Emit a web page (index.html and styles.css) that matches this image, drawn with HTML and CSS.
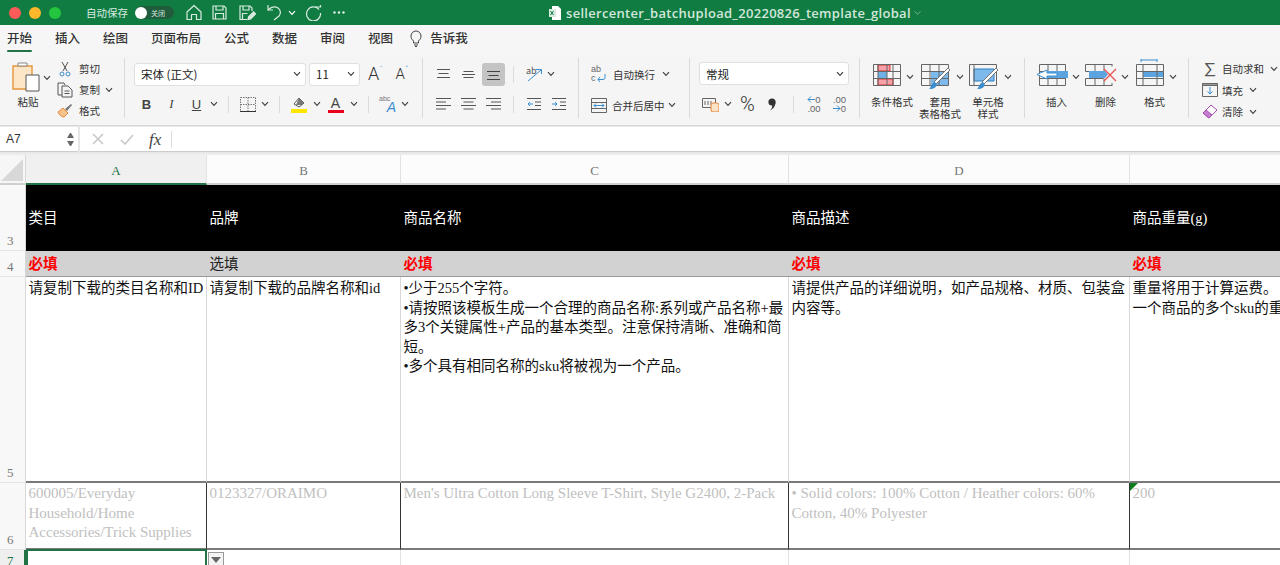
FILE: index.html
```html
<!DOCTYPE html>
<html lang="zh-CN">
<head>
    <meta charset="UTF-8">
    <title>sellercenter_batchupload_20220826_template_global</title>
    <link rel="stylesheet" href="styles.css">
</head>
<body>
    <svg class="defs" width="0" height="0">
        <symbol id="chev" viewBox="0 0 8 6"><path d="M1 1.200 4 4.400 7 1.200" fill="none" stroke="#444" stroke-width="1.200"/></symbol>
    </svg>

    <!-- Title bar -->
    <div class="titlebar">
        <div class="lights"><i class="red"></i><i class="yellow"></i><i class="green"></i></div>
        <span class="autosave">自动保存</span>
        <span class="toggle"><i></i>关闭</span>
        <svg class="home" width="16" height="17" viewBox="0 0 16 17" fill="none" stroke="#d9ebe1" stroke-width="1.200"><path d="M1 8 8 1.500 15 8v7.500h-4.500v-5h-5v5H1z" stroke-linejoin="round"/></svg>
        <svg class="save" width="15" height="15" viewBox="0 0 15 15" fill="none" stroke="#d9ebe1" stroke-width="1.200"><path d="M1 1h11l2 2v11H1z"/><path d="M4 1v4h7V1M3.500 14V8.500h8V14"/></svg>
        <svg class="saveas" width="17" height="16" viewBox="0 0 17 16" fill="none" stroke="#d9ebe1" stroke-width="1.200"><path d="M8 14.500H1V1h10l2 2v3"/><path d="M4 1v4h6V1M3.500 14V8.500h5"/><path d="m9 14.500.6-2.600 5-5 2 2-5 5z" fill="#d9ebe1"/></svg>
        <svg class="undo" width="15" height="17" viewBox="0 0 15 17" fill="none" stroke="#d9ebe1" stroke-width="1.200"><path d="M1 1v5h5"/><path d="M1 6c3-3 7-4 10-2 3 2 3 6 1 8l-5 4"/></svg>
        <svg class="chev-light" width="8" height="6"><use href="#chev"/></svg>
        <svg class="redo" width="17" height="17" viewBox="0 0 17 17" fill="none" stroke="#d9ebe1" stroke-width="1.200"><path d="M14 5.500A7 7 0 1 0 15.500 9"/><path d="M10 3h5.500V1"/></svg>
        <svg class="more" width="12" height="3" viewBox="0 0 12 3" fill="#e4f0ea"><circle cx="1.500" cy="1.500" r="1.200"/><circle cx="6" cy="1.500" r="1.200"/><circle cx="10.500" cy="1.500" r="1.200"/></svg>
        <svg class="xls" width="12" height="14" viewBox="0 0 12 14"><path d="M3 0h6l3 3v11H3z" fill="#fff"/><path d="M0 3h7v8H0z" fill="#d9ebe1"/><path d="m1.500 5 3 4m0-4-3 4" stroke="#107c41"/></svg>
        <span class="filename">sellercenter_batchupload_20220826_template_global</span>
        <svg class="chev-title" width="9" height="6" viewBox="0 0 8 6"><path d="M1 1.200 4 4.400 7 1.200" fill="none" stroke="#6fae8d" stroke-width="1"/></svg>
    </div>

    <!-- Tabs -->
    <div class="tabs">
        <a class="active">开始</a>
        <a>插入</a>
        <a>绘图</a>
        <a>页面布局</a>
        <a>公式</a>
        <a>数据</a>
        <a>审阅</a>
        <a>视图</a>
        <svg class="bulb" width="12" height="17" viewBox="0 0 12 17" fill="none" stroke="#444"><path d="M3.500 11C2 9.500 1 8.500 1 6a5 5 0 0 1 10 0c0 2.500-1 3.500-2.500 5v2h-5zM4 15h4M5 16.500h2"/></svg>
        <a class="tell">告诉我</a>
    </div>

    <!-- Ribbon -->
    <div class="ribbon">
        <div class="group g-clip">
            <div class="paste">
                <svg width="36" height="30" viewBox="0 0 36 30">
                    <path d="M1 4h19v23H1z" fill="#fbe6c8" stroke="#e8963c" stroke-width="1.400"/>
                    <path d="M6 4h9V1H6z" fill="#fff" stroke="#888"/>
                    <path d="M14 13h13v16H14z" fill="#fff" stroke="#555"/>
                </svg>
                <svg class="paste-chev" width="8" height="6"><use href="#chev"/></svg>
                <span>粘贴</span>
            </div>
            <div class="clip-list">
                <div class="clip-row">
                    <svg width="12" height="16" viewBox="0 0 12 16" fill="none" stroke="#555"><path d="M3 1l5 9M9 1 4 10"/><circle cx="3" cy="13" r="2" stroke="#3b8ed0"/><circle cx="9" cy="13" r="2" stroke="#3b8ed0"/></svg>
                    <span>剪切</span>
                </div>
                <div class="clip-row">
                    <svg width="16" height="16" viewBox="0 0 16 16" fill="none" stroke="#555"><path d="M5 13H1V1h6l1 2"/><path d="M5 4h6l4 4v7H5zM7.500 9h5M7.500 11.500h5"/></svg>
                    <span>复制</span>
                    <svg width="8" height="6"><use href="#chev"/></svg>
                </div>
                <div class="clip-row">
                    <svg width="16" height="15" viewBox="0 0 16 15"><path d="M1 9l5-4 5 5-4 4C5 14 2 12 1 9z" fill="#f4c48a" stroke="#e8863c"/><path d="M8 6l6-5 1 1-5 6z" fill="#777"/></svg>
                    <span>格式</span>
                </div>
            </div>
        </div>

        <div class="group g-font">
            <div class="grid font-row1">
                <div class="select font-select">宋体 (正文)<svg width="8" height="6"><use href="#chev"/></svg></div>
                <div class="select size-select">11<svg width="8" height="6"><use href="#chev"/></svg></div>
                <span class="grow">A<sup>ˆ</sup></span>
                <span class="shrink">A<sup>ˇ</sup></span>
            </div>
            <div class="grid font-row2">
                <b class="glyph">B</b>
                <i class="glyph serif">I</i>
                <u class="glyph">U</u>
                <svg width="8" height="6"><use href="#chev"/></svg>
                <i class="sep"></i>
                <svg width="16" height="15" viewBox="0 0 16 15" fill="none" stroke="#777" stroke-dasharray="1.500 1"><path d="M.5.500h15v14H.5zM8 .500v14M.5 7.500h15"/><path d="M0 14.500h16" stroke="#333" stroke-dasharray="none"/></svg>
                <svg width="8" height="6"><use href="#chev"/></svg>
                <i class="sep"></i>
                <svg width="16" height="17" viewBox="0 0 16 17"><path d="M3 8l5-6 5 5-5 4z" fill="#fff" stroke="#555"/><path d="M8 2l5 5-2 2H5z" fill="#777"/><path d="M0 13h16v4H0z" fill="#ffe600"/></svg>
                <svg width="8" height="6"><use href="#chev"/></svg>
                <span class="font-color">A</span>
                <svg width="8" height="6"><use href="#chev"/></svg>
                <i class="sep"></i>
                <span class="abc"><small>abc</small><em>A</em></span>
                <svg width="8" height="6"><use href="#chev"/></svg>
            </div>
        </div>

        <div class="group g-align">
            <div class="grid align-row1">
                <svg width="15" height="11" viewBox="0 0 15 11" stroke="#555"><path d="M1 .5h13M2.500 4.500h10M1 8.500h13"/></svg>
                <svg width="15" height="11" viewBox="0 0 15 11" stroke="#555"><path d="M2.500 2.500h10M1 5.500h13M2.500 8.500h10"/></svg>
                <span class="pressed"><svg width="15" height="11" viewBox="0 0 15 11" stroke="#444"><path d="M1 2.500h13M2.500 6.500h10M1 10.500h13"/></svg></span>
                <i class="sep"></i>
                <span class="orient">ab<svg width="16" height="14" viewBox="0 0 16 14" fill="none" stroke="#3b8ed0"><path d="M1 13 14 2M9 1.500h5.500V6"/></svg></span>
                <svg width="8" height="6"><use href="#chev"/></svg>
            </div>
            <div class="grid align-row2">
                <svg width="15" height="14" viewBox="0 0 15 14" stroke="#555"><path d="M0 1.500h15M0 5h10M0 8.500h15M0 12h10"/></svg>
                <svg width="15" height="14" viewBox="0 0 15 14" stroke="#555"><path d="M0 1.500h15M2.500 5h10M0 8.500h15M2.500 12h10"/></svg>
                <svg width="15" height="14" viewBox="0 0 15 14" stroke="#555"><path d="M0 1.500h15M5 5h10M0 8.500h15M5 12h10"/></svg>
                <i class="sep"></i>
                <svg width="15" height="14" viewBox="0 0 15 14" fill="none" stroke="#555"><path d="M0 1.500h14M8 5h6M8 8.500h6M0 12.500h14"/><path d="M6 7H1M3 5 1 7l2 2" stroke="#3b8ed0"/></svg>
                <svg width="15" height="14" viewBox="0 0 15 14" fill="none" stroke="#555"><path d="M0 1.500h14M8 5h6M8 8.500h6M0 12.500h14"/><path d="M0 7h5M3 5l2 2-2 2" stroke="#3b8ed0"/></svg>
            </div>
        </div>

        <div class="group g-wrap">
            <div class="wrap-row">
                <span class="wrap-icon">ab<br>c<svg width="9" height="8" viewBox="0 0 9 8" fill="none" stroke="#3b8ed0"><path d="M8 0v3.500a2 2 0 0 1-2 2H1M3 3 1 5.500 3 8"/></svg></span>
                <span>自动换行</span>
                <svg width="8" height="6"><use href="#chev"/></svg>
            </div>
            <div class="wrap-row merge">
                <svg width="16" height="15" viewBox="0 0 16 15" fill="none" stroke="#666"><path d="M.5.500h15v14H.5zM.5 4.500h15M.5 10.500h15"/><path d="M3 7.500h10M5 5.500l-2 2 2 2M11 5.500l2 2-2 2" stroke="#3b8ed0"/></svg>
                <span>合并后居中</span>
                <svg width="8" height="6"><use href="#chev"/></svg>
            </div>
        </div>

        <div class="group g-number">
            <div class="select number-select">常规<svg width="8" height="6"><use href="#chev"/></svg></div>
            <div class="grid number-row">
                <svg width="17" height="15" viewBox="0 0 17 15"><path d="M.5 1.500h13v9H.5z" fill="none" stroke="#666"/><path d="M3 4v4M6 4v4M9 4v4" stroke="#666"/><rect x="9" y="6" width="8" height="9" rx="2" fill="#fbe3c8" stroke="#e8863c"/></svg>
                <svg width="8" height="6"><use href="#chev"/></svg>
                <span class="percent">%</span>
                <svg width="8" height="13" viewBox="0 0 8 13"><circle cx="4" cy="4" r="3.600" fill="#333"/><path d="M7.500 4c0 4-2 7-5.500 8.500 2-2 2.500-4 2-5z" fill="#333"/></svg>
                <i class="sep"></i>
                <span class="dec"><svg width="8" height="7" viewBox="0 0 8 7" fill="none" stroke="#3b8ed0"><path d="M8 3.500H1M4 .5l-3 3 3 3"/></svg>0<br>.00</span>
                <span class="dec">.00<br><svg width="8" height="7" viewBox="0 0 8 7" fill="none" stroke="#3b8ed0"><path d="M0 3.500h7M4 .5l3 3-3 3"/></svg>0</span>
            </div>
        </div>

        <div class="group g-styles">
            <div class="big">
                <div class="big-icon">
                    <svg width="28" height="22" viewBox="0 0 28 22"><path d="M5 1h12v6H5zM5 15h15v6H5z" fill="#f8a0a8" stroke="#d33"/><path d="M5 8h9v6H5z" fill="#6fb1e4"/><path d="M.5.500h27v21H.5zM.5 7.500h27M.5 14.500h27M5 .500v21M14 .500v21M20 .500v21" fill="none" stroke="#666"/></svg>
                    <svg width="8" height="6"><use href="#chev"/></svg>
                </div>
                <span>条件格式</span>
            </div>
            <div class="big">
                <div class="big-icon">
                    <svg width="30" height="26" viewBox="0 0 30 26"><path d="M10 8h17v13H10z" fill="#7db9ea"/><path d="M.5.500h27v21H.5zM.5 7.500h27M.5 14.500h27M9 .500v21M18 .500v21" fill="none" stroke="#666"/><path d="M13 18 27 4l2 2-14 14z" fill="#fff" stroke="#777"/><path d="M8 25c2-1 2-6 6-7l2 3c-2 4-5 4-8 4z" fill="#3b8ed0"/></svg>
                    <svg width="8" height="6"><use href="#chev"/></svg>
                </div>
                <span>套用<br>表格格式</span>
            </div>
            <div class="big">
                <div class="big-icon">
                    <svg width="30" height="26" viewBox="0 0 30 26"><path d="M5 5h20v12H5z" fill="#7db9ea" stroke="#2b7cc2"/><path d="M.5.500h27v21H.5zM5 .500v21" fill="none" stroke="#666"/><path d="M13 18 27 4l2 2-14 14z" fill="#fff" stroke="#777"/><path d="M8 25c2-1 2-6 6-7l2 3c-2 4-5 4-8 4z" fill="#3b8ed0"/></svg>
                    <svg width="8" height="6"><use href="#chev"/></svg>
                </div>
                <span>单元格<br>样式</span>
            </div>
        </div>

        <div class="group g-cells">
            <div class="big">
                <div class="big-icon">
                    <svg width="32" height="22" viewBox="0 0 32 22"><path d="M3.500.500h26v21h-26z" fill="none" stroke="#666"/><path d="M3.500 7.500h26M3.500 14.500h26M12 .500v21M21 .500v21" stroke="#666"/><path d="M9 7h23v7H9z" fill="#5ba4e0"/><path d="M11 6 1 10.500l10 4.500v-3h10V9H11z" fill="#fff" stroke="#3b8ed0"/></svg>
                    <svg width="8" height="6"><use href="#chev"/></svg>
                </div>
                <span>插入</span>
            </div>
            <div class="big">
                <div class="big-icon">
                    <svg width="32" height="22" viewBox="0 0 32 22"><path d="M.5.500h27M.5 21.500h27M.5 7.500h18M.5 14.500h18M.5.500v7M.5 14.500v7M10 .500v7M10 14.500v7M19 .500v7M19 14.500v7M27 .500v2M27 19v2" fill="none" stroke="#666"/><path d="M4 7h16l3 3.500-3 3.500H4z" fill="#5ba4e0"/><path d="M19 5l12 12M31 5 19 17" stroke="#e8524a" stroke-width="1.300"/></svg>
                    <svg width="8" height="6"><use href="#chev"/></svg>
                </div>
                <span>删除</span>
            </div>
            <div class="big">
                <div class="big-icon">
                    <svg width="28" height="27" viewBox="0 0 28 27"><path d="M5 1h16M5 0v3M21 0v3" stroke="#3b8ed0" fill="none"/><path d="M7 12h20v6H7z" fill="#5ba4e0"/><path d="M.5 5.500h27v21H.5zM.5 12.500h27M.5 19.500h27M7 5.500v21M21 5.500v21" fill="none" stroke="#666"/></svg>
                    <svg width="8" height="6"><use href="#chev"/></svg>
                </div>
                <span>格式</span>
            </div>
        </div>

        <div class="group g-edit">
            <div class="edit-row">
                <span class="edit-icon sum">∑</span>
                <span>自动求和</span>
                <svg width="8" height="6"><use href="#chev"/></svg>
            </div>
            <div class="edit-row">
                <span class="edit-icon"><svg width="16" height="14" viewBox="0 0 16 14" fill="none" stroke="#666"><path d="M.5.500h15v13H.5z"/><path d="M.5.500h15v2H.5z" fill="#999"/><path d="M8 4v7M5.500 8.500 8 11l2.500-2.500" stroke="#3b8ed0"/></svg></span>
                <span>填充</span>
                <svg width="8" height="6"><use href="#chev"/></svg>
            </div>
            <div class="edit-row">
                <span class="edit-icon"><svg width="16" height="15" viewBox="0 0 16 15"><path d="M1 9 9 1l6 5-8 8z" fill="#fff" stroke="#a64bb0"/><path d="M1 9l3-3 6 5-3 3z" fill="#c77fd0" stroke="#a64bb0"/></svg></span>
                <span>清除</span>
                <svg width="8" height="6"><use href="#chev"/></svg>
            </div>
        </div>
    </div>

    <!-- Formula bar -->
    <div class="formula">
        <div class="namebox">A7<span class="spin"><i class="up"></i><i class="down"></i></span></div>
        <div class="fbar">
            <svg width="12" height="12" viewBox="0 0 12 12" stroke="#c8c8c8" stroke-width="1.600"><path d="M1 1l10 10M11 1 1 11"/></svg>
            <svg class="check" width="14" height="11" viewBox="0 0 14 11" fill="none" stroke="#c8c8c8" stroke-width="1.600"><path d="M1 6l4 4 8-9"/></svg>
            <span class="fx">fx</span>
        </div>
    </div>

    <!-- Sheet -->
    <div class="sheet">
        <div class="corner"><i></i></div>
        <div class="col sel">A</div>
        <div class="col">B</div>
        <div class="col">C</div>
        <div class="col">D</div>
        <div class="col">E</div>

        <div class="rownum">3</div>
        <div class="cell head">类目</div>
        <div class="cell head">品牌</div>
        <div class="cell head">商品名称</div>
        <div class="cell head">商品描述</div>
        <div class="cell head">商品重量(g)</div>

        <div class="rownum">4</div>
        <div class="cell req must">必填</div>
        <div class="cell req">选填</div>
        <div class="cell req must">必填</div>
        <div class="cell req must">必填</div>
        <div class="cell req must">必填</div>

        <div class="rownum">5</div>
        <div class="cell help">请复制下载的类目名称和ID</div>
        <div class="cell help">请复制下载的品牌名称和id</div>
        <div class="cell help">•少于255个字符。<br>•请按照该模板生成一个合理的商品名称:系列或产品名称+最<br>多3个关键属性+产品的基本类型。注意保持清晰、准确和简<br>短。<br>•多个具有相同名称的sku将被视为一个产品。</div>
        <div class="cell help">请提供产品的详细说明，如产品规格、材质、包装盒<br>内容等。</div>
        <div class="cell help">重量将用于计算运费。<br>一个商品的多个sku的重量</div>

        <div class="rownum">6</div>
        <div class="cell sample">600005/Everyday<br>Household/Home<br>Accessories/Trick Supplies</div>
        <div class="cell sample">0123327/ORAIMO</div>
        <div class="cell sample">Men's Ultra Cotton Long Sleeve T-Shirt, Style G2400, 2-Pack</div>
        <div class="cell sample">• Solid colors: 100% Cotton / Heather colors: 60%<br>Cotton, 40% Polyester</div>
        <div class="cell sample flagged">200</div>

        <div class="rownum sel">7</div>
        <div class="cell last active"><span class="dropdown"></span></div>
        <div class="cell last"></div>
        <div class="cell last"></div>
        <div class="cell last"></div>
        <div class="cell last"></div>
    </div>
</body>
</html>
```

FILE: styles.css
```css
* {
    margin: 0;
    padding: 0;
    box-sizing: border-box;
}

html, body {
    height: 100%;
    overflow: hidden;
}

body {
    background: #fff;
    color: #333;
    font-family: "Noto Sans CJK SC", "Noto Sans", sans-serif;
    font-size: 10.5px;
    width: 1280px;
}

.defs {
    position: absolute;
}

/* Title bar */
.titlebar {
    display: flex;
    align-items: center;
    height: 25px;
    background: #107c41;
    color: #d9ebe1;
}

.titlebar svg { flex: none; }

.lights {
    display: flex;
    gap: 8px;
    margin-left: 9px;
}

.lights i {
    width: 12px;
    height: 12px;
    border-radius: 50%;
}

.lights .red { background: #fc5b57; }
.lights .yellow { background: #fdb72c; }
.lights .green { background: #25c63f; }

.autosave {
    margin-left: 25px;
    font-size: 10.5px;
}

.toggle {
    display: flex;
    align-items: center;
    gap: 4px;
    width: 39px;
    height: 13px;
    margin-left: 7px;
    border-radius: 7px;
    background: #205c3c;
    font-size: 7px;
}

.toggle i {
    width: 12px;
    height: 12px;
    border-radius: 50%;
    background: #fff;
}

.home { margin-left: 12px; }
.save { margin-left: 10px; }
.saveas { margin-left: 12px; }
.undo { margin-left: 11px; }
.chev-light { margin-left: 6px; filter: invert(1) brightness(1.6); }
.redo { margin-left: 9px; }
.more { margin-left: 11px; }
.xls { margin-left: 204px; }

.filename {
    margin-left: 5px;
    font-family: "Open Sans", sans-serif;
    font-size: 13px;
    font-weight: 600;
    letter-spacing: .3px;
    color: #d3e6dc;
}

.chev-title { margin-left: 2px; }

/* Tabs */
.tabs {
    display: flex;
    align-items: center;
    height: 30px;
    padding: 0 0 4px 7px;
    gap: 23px;
    background: #f6f6f6;
}

.tabs a {
    position: relative;
    font-size: 12.5px;
    line-height: 18px;
    font-weight: 500;
    color: #333;
}

.tabs a.active::after {
    content: "";
    position: absolute;
    left: 0;
    right: 0;
    bottom: -5px;
    height: 2px;
    background: #217346;
    border-radius: 1px;
}

.bulb { margin-left: -6px; }
.tabs .tell { margin-left: -15px; }

/* Ribbon */
.ribbon {
    display: flex;
    height: 71px;
    padding-top: 3px;
    background: #f5f5f5;
    border-bottom: 1px solid #d8d8d8;
}

.group {
    height: 60px;
    border-right: 1px solid #dadada;
    flex: none;
}

.grid {
    display: grid;
    place-items: center;
    height: 24px;
}

.sep {
    width: 1px;
    height: 17px;
    background: #dcdcdc;
}

.select {
    display: flex;
    align-items: center;
    justify-content: space-between;
    height: 23px;
    padding: 0 4px 0 6px;
    background: #fff;
    border: 1px solid #e0e0e0;
    border-radius: 3px;
    font-size: 11.5px;
    color: #222;
}

/* Clipboard */
.g-clip {
    display: flex;
    width: 125px;
}

.paste {
    position: relative;
    width: 57px;
    padding: 4px 0 0 12px;
}

.paste svg { display: block; }

.paste .paste-chev {
    position: absolute;
    left: 43px;
    top: 17px;
}

.paste span {
    display: block;
    width: 32px;
    margin-top: 2px;
    text-align: center;
}

.clip-row {
    display: flex;
    align-items: center;
    height: 21px;
}

.clip-row svg:first-child { width: 16px; margin-right: 6px; }
.clip-row span { margin-right: 5px; }

/* Font */
.g-font {
    width: 298px;
    padding: 4px 0 0 9px;
}

.font-row1 {
    grid-template-columns: 175px 51px 31px 22px;
    margin-bottom: 6px;
}

.font-select {
    width: 172px;
    justify-self: start;
}

.size-select { width: 51px; }

.grow, .shrink {
    font-family: Roboto, sans-serif;
    font-weight: 300;
    font-size: 18px;
    color: #333;
    line-height: 1;
}

.shrink { font-size: 15px; }

.grow sup, .shrink sup {
    font-size: 9px;
    color: #3b8ed0;
    line-height: 0;
}

.font-row2 {
    grid-template-columns: 25px 25px 25px 10px 18px 21px 14px 14px 26px 10px 27px 10px 18px 21px 14px;
}

.glyph {
    font-family: "Liberation Sans", sans-serif;
    font-size: 13px;
    color: #444;
}

.serif { font-family: "Liberation Serif", serif; }

.font-color {
    width: 16px;
    font-family: "Liberation Sans", sans-serif;
    font-size: 14px;
    line-height: 14px;
    text-align: center;
    color: #444;
    border-bottom: 3px solid #e8001c;
}

.abc {
    position: relative;
    width: 17px;
    height: 18px;
    color: #777;
}

.abc small {
    position: absolute;
    left: 0;
    top: 0;
    font-size: 7px;
    font-family: "Liberation Sans", sans-serif;
}

.abc em {
    position: absolute;
    right: 0;
    bottom: -1px;
    font-size: 14px;
    line-height: 14px;
    color: #3b8ed0;
    font-family: "Liberation Sans", sans-serif;
}

/* Alignment */
.g-align {
    width: 156px;
    padding: 4px 0 0 7px;
}

.align-row1 {
    grid-template-columns: 26px 25px 25px 14px 28px 6px;
    margin-bottom: 6px;
}

.align-row2 {
    grid-template-columns: 26px 25px 25px 14px 28px 22px;
}

.pressed {
    display: flex;
    align-items: center;
    justify-content: center;
    width: 23px;
    height: 23px;
    background: #c4c4c4;
    border-radius: 3px;
}

.orient {
    position: relative;
    width: 16px;
    height: 16px;
    font-size: 9px;
    line-height: 9px;
    color: #555;
}

.orient svg {
    position: absolute;
    left: 1px;
    top: 2px;
}

/* Wrap and merge */
.g-wrap {
    width: 111px;
    padding: 4px 0 0 12px;
}

.wrap-row {
    display: flex;
    align-items: center;
    gap: 7px;
    height: 24px;
    margin-bottom: 7px;
}

.merge { gap: 5px; }
.merge svg:last-child { margin-left: -2px; }

.wrap-icon {
    position: relative;
    width: 15px;
    height: 18px;
    font-family: "Liberation Sans", sans-serif;
    font-size: 9px;
    line-height: 9px;
    color: #666;
}

.wrap-icon svg {
    position: absolute;
    right: 0;
    bottom: 1px;
}

/* Number */
.g-number {
    width: 170px;
    padding: 4px 0 0 9px;
}

.number-select {
    width: 150px;
    margin-bottom: 7px;
}

.number-row {
    grid-template-columns: 22px 14px 25px 24px 18px 24px 27px;
}

.percent {
    font-family: Roboto, sans-serif;
    font-weight: 300;
    font-size: 20px;
    line-height: 1;
    color: #333;
}

.dec {
    font-family: "Liberation Sans", sans-serif;
    font-size: 9.5px;
    line-height: 9px;
    text-align: right;
    color: #666;
}

/* Styles and cells */
.g-styles {
    display: flex;
    width: 165px;
    padding: 6px 0 0 8px;
}

.g-cells {
    display: flex;
    width: 164px;
    padding: 6px 0 0 7px;
}

.big {
    width: 48px;
    text-align: center;
    line-height: 12px;
}

.big-icon {
    display: flex;
    align-items: flex-start;
    gap: 5px;
    height: 32px;
    padding-left: 5px;
    text-align: left;
}

.big-icon svg:last-child { margin-top: 10px; flex: none; }
.big-icon svg:first-child { flex: none; }

.g-cells .big-icon { padding-left: 4px; gap: 4px; }
.g-cells .big { width: 49px; }
.g-cells .big:last-child .big-icon { margin-top: -5px; height: 37px; padding-left: 6px; gap: 5px; }
.g-cells .big:last-child .big-icon svg:last-child { margin-top: 15px; }

/* Editing */
.g-edit {
    width: 91px;
    border-right: none;
    padding-left: 10px;
}

.edit-row {
    display: flex;
    align-items: center;
    height: 21.5px;
}

.edit-row span:nth-child(2) { margin-right: 6px; }

.edit-icon {
    display: flex;
    justify-content: center;
    align-items: center;
    width: 22px;
    margin-right: 1px;
}

.sum {
    font-size: 17px;
    line-height: 1;
    color: #555;
}

/* Formula bar */
.formula {
    display: flex;
    height: 29px;
    padding-top: 1px;
    background: #e6e6e6;
    border-bottom: 2px solid #ececec;
}

.namebox {
    position: relative;
    width: 78px;
    height: 25px;
    padding-left: 6px;
    background: #fff;
    border-bottom: 1px solid #ccc;
    font-family: "Liberation Sans", sans-serif;
    font-size: 12px;
    line-height: 25px;
    color: #333;
}

.spin {
    position: absolute;
    right: 4px;
    top: 6px;
    width: 7px;
}

.spin i {
    display: block;
    border-left: 3.5px solid transparent;
    border-right: 3.5px solid transparent;
}

.spin .up { border-bottom: 5px solid #666; margin-bottom: 3px; }
.spin .down { border-top: 5px solid #666; }

.fbar {
    display: flex;
    align-items: center;
    flex: 1;
    height: 25px;
    margin-left: 2px;
    padding-left: 12px;
    background: #fff;
    border-bottom: 1px solid #ccc;
}

.check { margin-left: 16px; }

.fx {
    width: 23px;
    margin-left: 15px;
    border-right: 1px solid #ddd;
    font-family: "Liberation Serif", serif;
    font-size: 17px;
    font-style: italic;
    line-height: 17px;
    color: #444;
}

/* Sheet */
.sheet {
    display: grid;
    grid-template-columns: 26px 181px 194px 388px 341px 400px;
    grid-template-rows: 30px 66px 26px 206px 67px 15px;
    font-family: "Liberation Serif", "Noto Sans CJK SC", serif;
    font-size: 14.5px;
    line-height: 19.5px;
    color: #111;
}

.corner {
    position: relative;
    background: #f6f6f6;
    border-right: 1px solid #d8d8d8;
    border-bottom: 2px solid #cfcfcf;
}

.corner i {
    position: absolute;
    right: 2px;
    bottom: 2px;
    border-left: 22px solid transparent;
    border-bottom: 22px solid #d8d8d8;
}

.col {
    display: flex;
    align-items: center;
    justify-content: center;
    padding-top: 3px;
    background: #fcfcfc;
    border-right: 1px solid #e2e2e2;
    border-bottom: 2px solid #cfcfcf;
    font-size: 13px;
    color: #777;
}

.col.sel {
    background: #f0f0f0;
    border-bottom-color: #217346;
    color: #217346;
}

.rownum {
    display: flex;
    align-items: flex-end;
    padding: 0 0 1px 7px;
    background: #f8f8f8;
    border-right: 1px solid #d8d8d8;
    border-bottom: 1px solid #e4e4e4;
    font-size: 13px;
    line-height: 17px;
    color: #777;
}

.rownum.sel {
    align-items: flex-start;
    padding: 2px 0 0 7px;
    background: #efefef;
    color: #217346;
    border-right: 2px solid #217346;
    border-bottom: none;
}

.cell {
    padding: 0 2.5px;
    white-space: nowrap;
    overflow: hidden;
}

.head {
    display: flex;
    align-items: center;
    padding: 1px 2.5px 0;
    background: #000;
    color: #fff;
}

.req {
    display: flex;
    align-items: center;
    padding: 3px 2.5px 0;
    background: #d2d2d2;
    color: #222;
    border-bottom: 1px solid #999;
}

.must {
    color: #f00;
    font-weight: 700;
}

.help {
    padding-top: 2px;
    border-right: 1px solid #d8d8d8;
    border-bottom: 2px solid #7a7a7a;
}

.sample {
    padding-top: 1px;
    font-size: 15px;
    color: #c0c0c0;
    border-right: 1px solid #333;
    border-bottom: 2px solid #7a7a7a;
}

.flagged {
    position: relative;
    overflow: visible;
    border-right: none;
}

.flagged::before {
    content: "";
    position: absolute;
    left: 0;
    top: 0;
    border-top: 8px solid #0a7d1e;
    border-right: 8px solid transparent;
}

.last {
    border-right: 1px solid #e2e2e2;
    overflow: visible;
}

.last.active {
    position: relative;
    border: 2px solid #217346;
    border-bottom: none;
    margin-top: -1px;
}

.dropdown {
    position: absolute;
    left: 180px;
    top: 1px;
    width: 16px;
    height: 16px;
    background: #f4f4f4;
    border: 1px solid #999;
    z-index: 1;
}

.dropdown::after {
    content: "";
    position: absolute;
    left: 2px;
    top: 4px;
    border-left: 5px solid transparent;
    border-right: 5px solid transparent;
    border-top: 6px solid #666;
}
```
